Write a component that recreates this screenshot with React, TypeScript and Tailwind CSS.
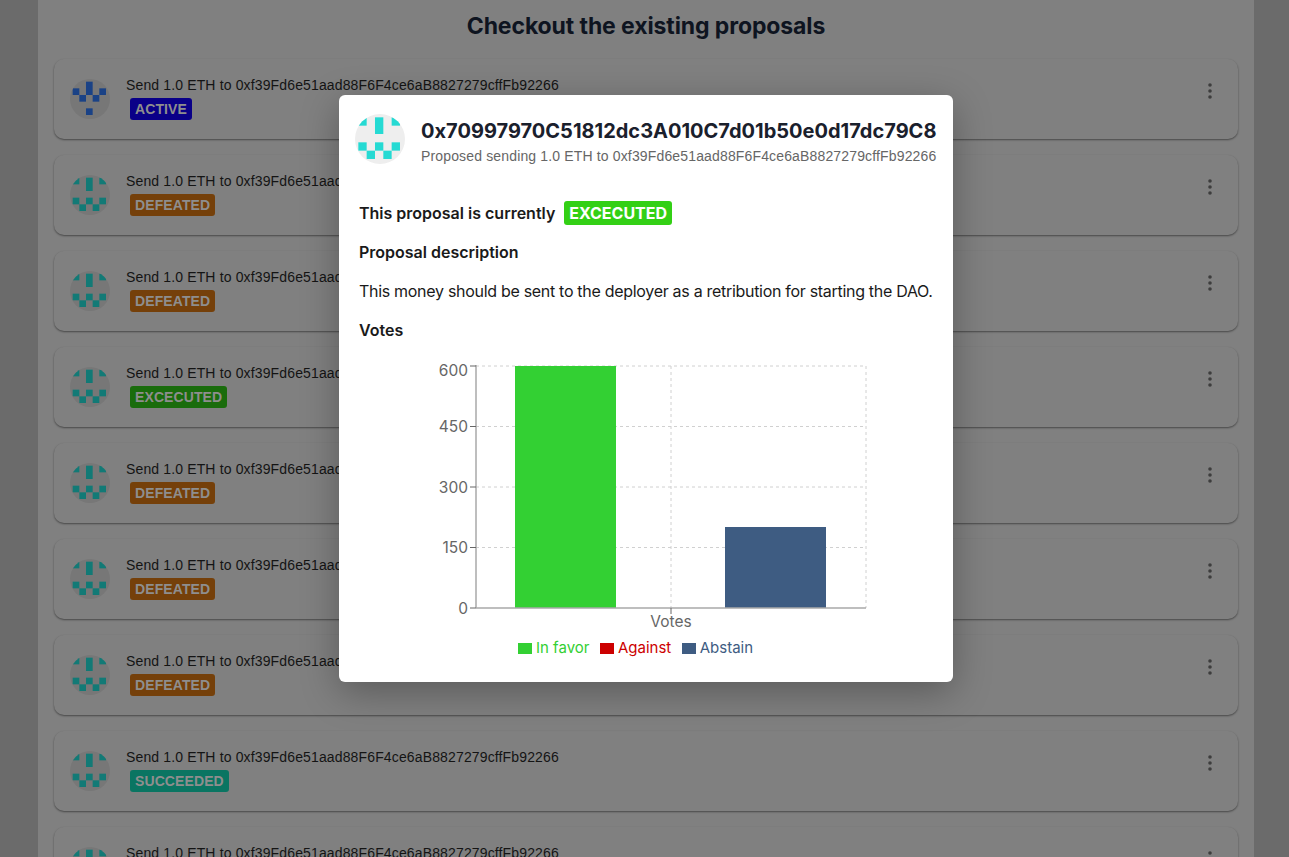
const ADDRESS = "0xf39Fd6e51aad88F6F4ce6aB8827279cffFb92266";

type ProposalRow = {
  status: string;
  badge: string;
  color: string;
};

const rows: ProposalRow[] = [
  { status: "ACTIVE", badge: "bg-[#0a0088]", color: "#1a4286" },
  { status: "DEFEATED", badge: "bg-[#75400a]", color: "#127a76" },
  { status: "DEFEATED", badge: "bg-[#75400a]", color: "#127a76" },
  { status: "EXCECUTED", badge: "bg-[#1a6c0c]", color: "#127a76" },
  { status: "DEFEATED", badge: "bg-[#75400a]", color: "#127a76" },
  { status: "DEFEATED", badge: "bg-[#75400a]", color: "#127a76" },
  { status: "DEFEATED", badge: "bg-[#75400a]", color: "#127a76" },
  { status: "SUCCEEDED", badge: "bg-[#0a7562]", color: "#127a76" },
  { status: "DEFEATED", badge: "bg-[#75400a]", color: "#127a76" },
];

const blue = [[2, 0, 1, 2], [0, 1, 1, 1], [4, 1, 1, 1], [1, 2, 1, 1], [3, 2, 1, 1], [2, 4, 1, 1]];
const teal = [[2, 0, 1, 2], [0, 0, 1, 1], [4, 0, 1, 1], [0, 3, 1, 1], [2, 3, 1, 1], [4, 3, 1, 1], [1, 4, 1, 1], [3, 4, 1, 1]];

const Identicon = ({ size, color, bg, cells, id }: { size: number; color: string; bg: string; cells: number[][]; id: string }) => (
  <svg width={size} height={size} viewBox="0 0 50 50" className="shrink-0">
    <clipPath id={id}>
      <circle cx="25" cy="25" r="25" />
    </clipPath>
    <g clipPath={`url(#${id})`}>
      <rect width="50" height="50" fill={bg} />
      {cells.map(([x, y, w, h], i) => (
        <rect key={i} x={3.33 + x * 8.33} y={3.33 + y * 8.33} width={w * 8.33} height={h * 8.33} fill={color} />
      ))}
    </g>
  </svg>
);

const Chart = () => (
  <svg width="460" height="272" viewBox="0 0 460 272" className="block" style={{ fontFamily: "Inter, sans-serif" }}>
    {/* grid */}
    <g stroke="#d0d0d0" strokeDasharray="3 3" fill="none">
      <line x1="66" y1="6" x2="456" y2="6" />
      <line x1="66" y1="66.5" x2="456" y2="66.5" />
      <line x1="66" y1="127" x2="456" y2="127" />
      <line x1="66" y1="187.5" x2="456" y2="187.5" />
      <line x1="261" y1="6" x2="261" y2="248" />
      <line x1="456" y1="6" x2="456" y2="248" />
    </g>
    <rect x="105" y="6" width="101" height="242" fill="#33d033" />
    <rect x="315" y="167" width="101" height="81" fill="#3e5c82" />
    {/* axes */}
    <g stroke="#a8a8a8" strokeWidth="1.5" fill="none">
      <line x1="66" y1="5" x2="66" y2="248" />
      <line x1="66" y1="248" x2="456" y2="248" />
    </g>
    <g stroke="#666" fill="none">
      <line x1="60" y1="6" x2="66" y2="6" />
      <line x1="60" y1="66.5" x2="66" y2="66.5" />
      <line x1="60" y1="127" x2="66" y2="127" />
      <line x1="60" y1="187.5" x2="66" y2="187.5" />
      <line x1="60" y1="248" x2="66" y2="248" />
      <line x1="261" y1="248" x2="261" y2="254" />
    </g>
    <g fill="#666" fontSize="15.5" textAnchor="end">
      <text x="58" y="16">600</text>
      <text x="58" y="72">450</text>
      <text x="58" y="133">300</text>
      <text x="58" y="193">150</text>
      <text x="58" y="254">0</text>
    </g>
    <text x="261" y="267" fill="#666" fontSize="15.5" textAnchor="middle">Votes</text>
  </svg>
);

const LegendItem = ({ box, text, label }: { box: string; text: string; label: string }) => (
  <div className="flex items-center gap-1">
    <span className={`w-[14px] h-[11px] ${box}`} />
    <span className={text}>{label}</span>
  </div>
);

export default function App() {
  return (
    <div className="relative h-[857px] overflow-hidden bg-[#6b6b6b] font-['Inter',sans-serif]">
      <div className="ml-[38px] h-full w-[1216px] bg-[#808080] px-4">
        <h1 className="h-[59px] pt-[9px] text-center text-[23px] font-bold tracking-[-0.1px] text-[#0e1420]">
          Checkout the existing proposals
        </h1>
        <div className="flex flex-col gap-4">
          {rows.map((row, i) => (
            <div
              key={i}
              className="flex h-20 shrink-0 items-center rounded-[10px] bg-[#808080] pl-4 pr-[26px] shadow-[0_1px_2px_rgba(0,0,0,0.45)]"
            >
              <Identicon size={40} color={row.color} bg="#777777" cells={i === 0 ? blue : teal} id={`row-${i}`} />
              <div className="ml-4 flex-1 pb-[2px] font-['Liberation_Sans',sans-serif]">
                <p className="text-sm leading-5 tracking-[0.14px] text-[#141414]">Send 1.0 ETH to {ADDRESS}</p>
                <span
                  className={`ml-1 mt-[3px] inline-block rounded-[3px] px-[5px] text-sm font-bold leading-[22px] tracking-[0.1px] text-[#8e8e8e] ${row.badge}`}
                >
                  {row.status}
                </span>
              </div>
              <svg width="4" height="16" viewBox="0 0 4 16" className="mb-4 shrink-0" fill="#3d3d3d">
                <circle cx="2" cy="2" r="1.8" />
                <circle cx="2" cy="8" r="1.8" />
                <circle cx="2" cy="14" r="1.8" />
              </svg>
            </div>
          ))}
        </div>
      </div>

      {/* proposal modal */}
      <div className="absolute inset-0 flex items-start justify-center">
        <div className="ml-[3px] mt-[95px] h-[587px] w-[614px] rounded-[6px] bg-white shadow-[0_10px_38px_rgba(0,0,0,0.3)]">
          <div className="flex items-start gap-4 px-4 pt-[19px]">
            <Identicon size={50} color="#25dad3" bg="#eeeeee" cells={teal} id="modal" />
            <div className="min-w-0 pt-1">
              <p className="whitespace-nowrap text-xl font-bold leading-[26px] text-[#1a202c]">
                0x70997970C51812dc3A010C7d01b50e0d17dc79C8
              </p>
              <p className="mt-[3px] whitespace-nowrap font-['Liberation_Sans',sans-serif] text-sm leading-[18px] tracking-[0.15px] text-[#666666]">
                Proposed sending 1.0 ETH to {ADDRESS}
              </p>
            </div>
          </div>

          <div className="px-5 text-base leading-6 text-[#1a1a1a]">
            <div className="mt-9 flex items-center gap-[9px] font-semibold">
              <span>This proposal is currently</span>
              <span className="rounded-[3px] bg-[#33d015] px-[5px] font-bold leading-6 text-white">EXCECUTED</span>
            </div>
            <p className="mt-[15px] font-semibold">Proposal description</p>
            <p className="mt-[15px] whitespace-nowrap tracking-[-0.3px]">
              This money should be sent to the deployer as a retribution for starting the DAO.
            </p>
            <p className="mt-[15px] font-semibold">Votes</p>
          </div>

          <div className="ml-[21px] mt-[18px] w-[574px] pl-[50px]">
            <Chart />
            <div className="ml-[108px] mt-1 flex items-center gap-[10.5px] text-[15px] leading-6">
              <LegendItem box="bg-[#33d033]" text="text-[#33d033]" label="In favor" />
              <LegendItem box="bg-[#cc0000]" text="text-[#cc0000]" label="Against" />
              <LegendItem box="bg-[#3e5c82]" text="text-[#3e5c82]" label="Abstain" />
            </div>
          </div>
        </div>
      </div>
    </div>
  );
}
